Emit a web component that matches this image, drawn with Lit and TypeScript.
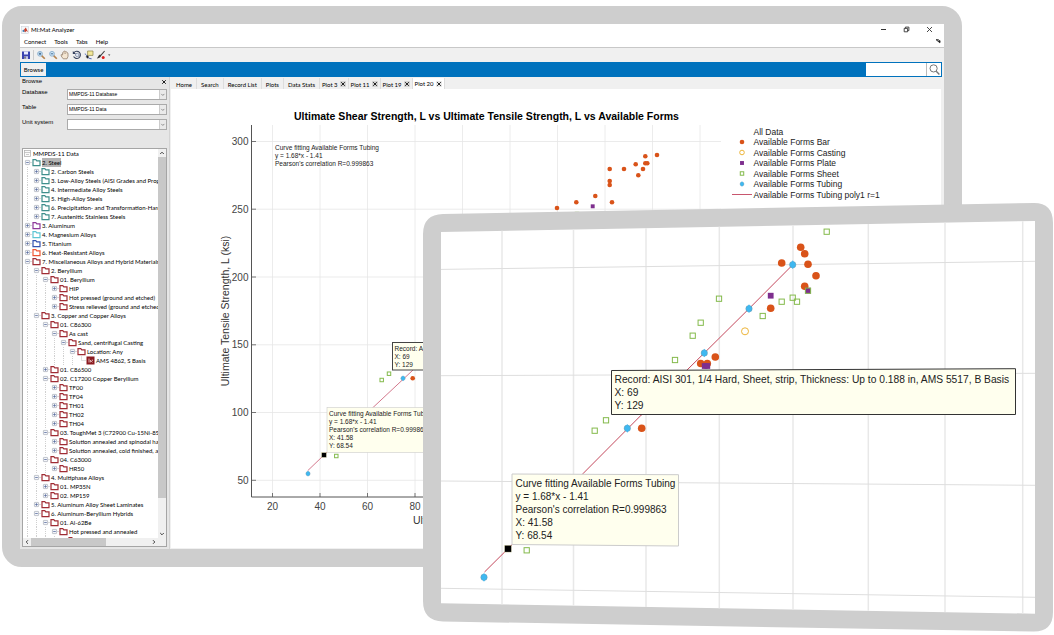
import { LitElement, html, svg, css } from "lit";
import { customElement, state } from "lit/decorators.js";
import { classMap } from "lit/directives/class-map.js";

type Point = [number, number];
type Kind = "bar" | "casting" | "plate" | "sheet" | "tubing" | "cursor";

const TEAL = "#3f8f8c";
const RED = "#a02c34";

/* [depth, state, label, folder colour]; state: "+" closed, "-" open, "*" record */
type Row = [number, string, string, string];
const TREE: Row[] = [
  [0, "-", "2. Steel", TEAL],
  [1, "+", "2. Carbon Steels", TEAL],
  [1, "+", "3. Low-Alloy Steels (AISI Grades and Proprietary)", TEAL],
  [1, "+", "4. Intermediate Alloy Steels", TEAL],
  [1, "+", "5. High-Alloy Steels", TEAL],
  [1, "+", "6. Precipitation- and Transformation-Hardening", TEAL],
  [1, "+", "7. Austenitic Stainless Steels", TEAL],
  [0, "+", "3. Aluminum", "#8e3a9b"],
  [0, "+", "4. Magnesium Alloys", "#5cc6d4"],
  [0, "+", "5. Titanium", "#3553b0"],
  [0, "+", "6. Heat-Resistant Alloys", "#ee5533"],
  [0, "-", "7. Miscellaneous Alloys and Hybrid Materials", RED],
  [1, "-", "2. Beryllium", RED],
  [2, "-", "01. Beryllium", RED],
  [3, "+", "HIP", RED],
  [3, "+", "Hot pressed (ground and etched)", RED],
  [3, "+", "Stress relieved (ground and etched)", RED],
  [1, "-", "3. Copper and Copper Alloys", RED],
  [2, "-", "01. C86300", RED],
  [3, "-", "As cast", RED],
  [4, "-", "Sand, centrifugal Casting", RED],
  [5, "-", "Location: Any", RED],
  [6, "*", "AMS 4862, S Basis", RED],
  [2, "+", "01. C86500", RED],
  [2, "-", "02. C17200 Copper Beryllium", RED],
  [3, "+", "TF00", RED],
  [3, "+", "TF04", RED],
  [3, "+", "TH01", RED],
  [3, "+", "TH02", RED],
  [3, "+", "TH04", RED],
  [2, "-", "03. ToughMet 3 (C72900 Cu-15Ni-8Sn)", RED],
  [3, "+", "Solution annealed and spinodal hardened", RED],
  [3, "+", "Solution annealed, cold finished, and aged", RED],
  [2, "-", "04. C63000", RED],
  [3, "+", "HR50", RED],
  [1, "-", "4. Multiphase Alloys", RED],
  [2, "+", "01. MP35N", RED],
  [2, "+", "02. MP159", RED],
  [1, "+", "5. Aluminum Alloy Sheet Laminates", RED],
  [1, "-", "6. Aluminum-Beryllium Hybrids", RED],
  [2, "-", "01. Al-62Be", RED],
  [3, "-", "Hot pressed and annealed", RED],
  [4, "+", "", RED],
];

/* One data marker of radius r. */
const marker = (kind: Kind, [x, y]: Point, r: number) => {
  switch (kind) {
    case "bar":
      return svg`<circle cx=${x} cy=${y} r=${r} fill="#d95319" />`;
    case "casting":
      return svg`<circle cx=${x} cy=${y} r=${r} fill="#fff" stroke="#edb53a" />`;
    case "plate":
      return svg`<rect x=${x - r * 0.85} y=${y - r * 0.85} width=${r * 1.7} height=${r * 1.7} fill="#7e2f8e" />`;
    case "sheet":
      return svg`<rect x=${x - r * 0.75} y=${y - r * 0.75} width=${r * 1.5} height=${r * 1.5} fill="none" stroke="#84ba4c" />`;
    case "tubing":
      return svg`<circle cx=${x} cy=${y} r=${r * 0.85} fill="#3fb4e8" stroke="#7a8fa0" stroke-width="0.4" />
        <path d=${`M${x} ${y - r * 1.15}L${x + r * 0.75} ${y}L${x} ${y + r * 1.15}L${x - r * 0.75} ${y}Z`} fill="#3fb8f0" />`;
    case "cursor":
      return svg`<rect x=${x - r} y=${y - r} width=${r * 2} height=${r * 2} fill="#000" stroke="#e8e6b8" stroke-width="0.4" />`;
  }
};

const series = (kind: Kind, points: Point[], r: number) =>
  points.map((p) => marker(kind, p, r));

const lines = (cls: string, x: number, y: number, step: number, rows: string[]) =>
  rows.map((t, i) => svg`<text class=${cls} x=${x} y=${y + i * step}>${t}</text>`);

const FIT = [
  "Curve fitting Available Forms Tubing",
  "y = 1.68*x - 1.41",
  "Pearson's correlation R=0.999863",
];
const FIT_AT = [...FIT, "X: 41.58", "Y: 68.54"];
const RECORD = [
  "Record: AISI 301, 1/4 Hard, Sheet, strip, Thickness: Up to 0.188 in, AMS 5517, B Basis",
  "X: 69",
  "Y: 129",
];

const chartText = css`
  :host {
    display: block;
    font-family: "Liberation Sans", Arial, sans-serif;
  }
  svg {
    display: block;
    width: 100%;
    height: auto;
  }
  text {
    fill: #222;
  }
`;

/* Full scatter plot. Text is set in drawing units, two to a pixel at the default width. */
@customElement("scatter-plot")
export class ScatterPlot extends LitElement {
  static styles = [
    chartText,
    css`
      .title { font-size: 21px; font-weight: 700; text-anchor: middle; fill: #000; }
      .axis { font-size: 21px; text-anchor: middle; fill: #333; }
      .ytick { font-size: 20px; text-anchor: end; fill: #444; }
      .xtick { font-size: 20px; text-anchor: middle; fill: #444; }
      .legend { font-size: 17px; }
      .note { font-size: 13px; }
    `,
  ];

  render() {
    const gx = [0, 1, 2, 3, 4, 5, 6, 7, 8, 9].map((i) => 272.5 + i * 47.5);
    const gy = [141.5, 209.2, 277, 344.8, 412.5, 480.3];
    const bars: Point[] = [
      [557, 208], [576.3, 202.3], [595.3, 196], [612, 202.3], [609.7, 169], [609.7, 181],
      [609.7, 185], [624, 169], [635.7, 164.3], [638.3, 175.3], [643, 169], [645.3, 156.3],
      [645.3, 163.3], [647.3, 163.3], [657, 155], [412.7, 378.3],
    ];
    const legend: [string, Kind | ""][] = [
      ["All Data", ""],
      ["Available Forms Bar", "bar"],
      ["Available Forms Casting", "casting"],
      ["Available Forms Plate", "plate"],
      ["Available Forms Sheet", "sheet"],
      ["Available Forms Tubing", "tubing"],
      ["Available Forms Tubing poly1 r=1", ""],
    ];
    return html`<svg viewBox="342 178 1540 918">
      <g transform="scale(2)">
        ${gx.map((x) => svg`<path d=${`M${x} 125V497`} stroke="#ececec" />`)}
        ${gy.map((y) => svg`<path d=${`M251 ${y}H721`} stroke="#e6e6e6" stroke-width="0.8" />`)}
        ${gx.map((x) => svg`<path d=${`M${x} 497v-4`} stroke="#555" stroke-width="0.8" />`)}
        ${gy.map((y) => svg`<path d=${`M251 ${y}h5`} stroke="#555" stroke-width="0.8" />`)}
        <path d="M251.5 125V497H721" fill="none" stroke="#555" />
        <path d="M307.7 470.7L324 455L373 407.5L413 370L430 352" fill="none" stroke="#c8566e" stroke-width="0.8" />
        ${series("bar", bars, 2.3)}
        ${series("plate", [[592.7, 206.3]], 2.3)}
        ${series("sheet", [[381.7, 380], [389, 373.7], [336.3, 456], [577, 214]], 2.3)}
        ${series("tubing", [[403, 378.3], [308, 473.7]], 2.5)}
        <rect x="392.5" y="342.5" width="60" height="27.5" fill="#ffffee" stroke="#444" />
        <rect x="327" y="407.5" width="110" height="45" fill="#ffffee" stroke="#ccc" stroke-width="0.6" />
        ${marker("cursor", [324, 455], 2.4)}
        ${legend.map(([, k], i) => (k ? marker(k, [742, 131.5 + i * 10.5], 2.3) : ""))}
        <path d="M732 194.5h20" stroke="#c8566e" />
      </g>
      <text class="title" x="973" y="240">Ultimate Shear Strength, L vs Ultimate Tensile Strength, L vs Available Forms</text>
      ${gy.map((y, i) => svg`<text class="ytick" x="497" y=${y * 2 + 7}>${300 - i * 50}</text>`)}
      ${gx.slice(0, 4).map((x, i) => svg`<text class="xtick" x=${x * 2} y="1020">${20 + i * 20}</text>`)}
      <text class="axis" transform="translate(457 622) rotate(-90)">Ultimate Tensile Strength, L (ksi)</text>
      <text class="axis" x="972" y="1047">Ultimate Shear Strength, L (ksi)</text>
      ${lines("note", 550, 299, 16, FIT)}
      ${lines("note", 789, 701, 16, ["Record: AISI 301", ...RECORD.slice(1)])}
      ${lines("note", 658, 831, 16, FIT_AT)}
      ${lines("legend", 1507, 269, 21, legend.map(([t]) => t))}
    </svg>`;
  }
}

/* Tilted close-up of the same plot, in its own frame. Four drawing units to a pixel. */
@customElement("plot-closeup")
export class PlotCloseup extends LitElement {
  static styles = [
    chartText,
    css`
      .fit { font-size: 40px; }
      .record { font-size: 41px; }
    `,
  ];

  render() {
    const gx = [502, 573.5, 646, 719.3, 793, 868.3, 945, 1022.7];
    const gy: Point[] = [[269.4, 261.3], [375.7, 373.3], [481, 485.3], [588.3, 597.3]];
    const bars: Point[] = [
      [715.3, 357], [700.7, 363.5], [707.3, 363.5], [641.7, 428.3], [781.7, 263], [800.7, 247.3],
      [804.7, 253.7], [808, 264.3], [816, 275.7], [804.7, 286.3], [770.7, 308.3],
    ];
    const sheets: Point[] = [
      [719, 298.7], [700.7, 322.7], [692.7, 335.7], [675, 360], [606, 420.3], [594.7, 430.7],
      [526.7, 550.3], [826.7, 231.7], [762.7, 316], [781.7, 301.7], [792.7, 297.7], [797, 301.7],
      [808, 290.7],
    ];
    return html`<svg viewBox="1692 812 2520 1716">
      <g transform="scale(4)">
        <path fill="#cecece" d="M443 214L1034 203Q1053 203 1053 223V612Q1053 632 1033 631.5L443 621.5Q423 621 423 601V234Q423 214.5 443 214Z" />
        <path fill="#fff" d="M441 232L1035 221V613.7L441 603.3Z" />
        ${gx.map((x) => svg`<path d=${`M${x} ${232 - ((x - 441) * 11) / 594}V${603.3 + ((x - 441) * 10.4) / 594}`} stroke="#e8e8e8" stroke-width="1.5" />`)}
        ${gy.map(([a, b]) => svg`<path d=${`M441 ${a}L1035 ${b}`} stroke="#dedede" />`)}
        <path d="M484.5 572L508 548.7L583.3 473.3L641.3 415L704.3 353L749 308.7L793 264.5" fill="none" stroke="#c4485c" />
        ${series("bar", bars, 3.8)}
        ${series("casting", [[745, 331.3]], 3.5)}
        ${series("plate", [[704.7, 366], [707.3, 366], [770.7, 295.7], [808, 290.7]], 3.4)}
        ${series("sheet", sheets, 3.5)}
        ${series("tubing", [[704.3, 353], [627.3, 428.3], [484, 577.3], [792.7, 264.7], [749, 308.7]], 3.8)}
        <path d="M611.5 370.5L1015.5 368.7V414.5H611.5Z" fill="#ffffee" stroke="#333" />
        <path d="M512 474L678.5 474.7V546L512 544.5Z" fill="#ffffee" stroke="#ccc" />
        ${marker("cursor", [508, 548.7], 3.4)}
      </g>
      ${lines("record", 2458, 1532, 52, RECORD)}
      ${lines("fit", 2062, 1946, 52, FIT_AT)}
    </svg>`;
  }
}

/* Navigation tree with its scroll bars. */
@customElement("record-tree")
export class RecordTree extends LitElement {
  static styles = css`
    :host {
      display: grid;
      grid-template: minmax(0, 1fr) 8px / minmax(0, 1fr) 8px;
      border: 1px solid #a5a5a5;
      background: #fff;
      min-height: 0;
      font: 6px/9px Lato, "Open Sans", sans-serif;
      color: #000;
    }
    .rows { overflow: hidden; margin: 0; padding: 0; list-style: none; }
    .row { display: flex; align-items: center; height: 9px; white-space: nowrap; }
    .pad { flex: none; width: 4px; height: 9px; margin-left: 4px; border-left: 1px dotted #d0d0d0; }
    .twig { flex: none; width: 9px; height: 9px; }
    .icon { flex: none; width: 9px; height: 9px; margin-right: 1px; }
    .chosen { background: #b4b4b4; }
    .bar { background: #f0f0f0; display: flex; align-items: center; }
    .v { flex-direction: column; }
    .arrow { flex: none; width: 8px; height: 8px; fill: none; stroke: #444; }
    .thumb { background: #c8c8c8; }
    .v .thumb { width: 8px; flex: 0 0 341px; }
    .h .thumb { height: 8px; flex: 0 0 75px; }
    .space { flex: 1; }
    .corner { background: #f0f0f0; }
  `;

  private twig(s: string) {
    if (s === "*") return html`<svg class="twig" viewBox="0 0 9 9"><path d="M4.5 0v4.5H9" fill="none" stroke="#ccc" stroke-width=".6" /></svg>`;
    return html`<svg class="twig" viewBox="0 0 9 9">
      <path d="M7 4.5H9" stroke="#ccc" stroke-width=".7" />
      <rect x="2.4" y="2.4" width="4.2" height="4.2" rx=".5" fill="#f4f6fa" stroke="#a8adb8" stroke-width=".7" />
      <path d=${s === "+" ? "M3.2 4.5H5.8M4.5 3.2V5.8" : "M3.2 4.5H5.8"} stroke="#5a6da0" stroke-width=".8" />
    </svg>`;
  }

  private icon(s: string, colour: string) {
    return s === "*"
      ? html`<svg class="icon" viewBox="0 0 9 9"><rect x=".5" y=".5" width="8" height="8" fill="#8b1a20" /><path d="M3 2.5v4M4.2 4.3l2.3 2M4.4 6.4V4.4M6.3 3.6v1.4" stroke="#f3d8d8" stroke-width=".8" /></svg>`
      : html`<svg class="icon" viewBox="0 0 9 9"><path d="M1 1.6H3.8L4.8 2.8H8V7.6H1Z" fill="#fff" stroke=${colour} stroke-width="1.2" /></svg>`;
  }

  render() {
    return html`
      <ul class="rows">
        <li class="row">
          <svg class="icon" viewBox="0 0 9 9"><rect x="1.5" y="1.5" width="6" height="6" fill="#fafafa" stroke="#b4b4b4" stroke-width=".8" /><path d="M1.5 3.5h6M3 5.5h3" stroke="#b4b4b4" stroke-width=".7" /></svg>MMPDS-11 Data
        </li>
        ${TREE.map(
          ([depth, s, label, colour], i) => html`<li class="row">
            ${Array.from({ length: depth }, () => html`<span class="pad"></span>`)}${this.twig(s)}${this.icon(s, colour)}<span
              class=${classMap({ chosen: i === 0 })}>${label}</span>
          </li>`,
        )}
      </ul>
      <div class="bar v">
        <svg class="arrow" viewBox="0 0 8 8"><path d="M2.2 5L4 3.2L5.8 5" /></svg>
        <div class="thumb"></div>
        <div class="space"></div>
        <svg class="arrow" viewBox="0 0 8 8"><path d="M2.2 3L4 4.8L5.8 3" /></svg>
      </div>
      <div class="bar h">
        <svg class="arrow" viewBox="0 0 8 8"><path d="M5 2.2L3.2 4L5 5.8" /></svg>
        <div class="thumb"></div>
        <div class="space"></div>
        <svg class="arrow" viewBox="0 0 8 8"><path d="M3 2.2L4.8 4L3 5.8" /></svg>
      </div>
      <div class="corner"></div>
    `;
  }
}

@customElement("app-root")
export class AppRoot extends LitElement {
  static styles = css`
    :host {
      display: block;
      position: relative;
      min-height: 635px;
      overflow: hidden;
      background: #fff;
      font: 6px/9px Lato, "Open Sans", sans-serif;
      color: #000;
    }
    * { box-sizing: border-box; }
    button, input, select {
      font: inherit;
      color: inherit;
      border: 0;
      padding: 0;
      margin: 0;
      background: none;
      border-radius: 0;
      outline: 0;
    }
    .screen {
      margin: 6px 92px 0 2px;
      border: 18px solid #cecece;
      border-radius: 20px;
      background: #cecece;
    }
    .window { background: #f0f0f0; display: flex; flex-direction: column; }
    .titlebar { display: flex; align-items: center; height: 11px; padding: 0 10px 0 1px; background: #fff; }
    .name { flex: 1; margin-left: 2px; }
    .logo { width: 8px; height: 8px; }
    .controls { display: flex; gap: 14px; }
    .controls svg { display: block; width: 9px; height: 9px; fill: none; stroke: #333; }
    .menubar { display: flex; align-items: center; gap: 8px; height: 12px; padding: 0 3px 0 4px; background: #fff; }
    .dock { width: 6px; height: 6px; margin-left: auto; }
    .toolbar { display: flex; align-items: center; gap: 2px; height: 15px; padding-left: 1px; border-top: 1px solid #c8c8c8; }
    .toolbar svg { display: block; width: 10px; height: 10px; fill: none; }
    .rule { width: 1px; height: 10px; background: #ccc; }
    .ribbon { display: flex; height: 15px; padding: 1px; margin-right: 2px; background: #0072bd; }
    .browse { width: 25px; background: #f0f0f0; }
    .find { width: 75px; margin-left: auto; display: flex; background: #fff; }
    .find input { flex: 1; min-width: 0; padding: 0 2px; }
    .find button { width: 15px; border-left: 1px solid #bbb; }
    .find svg { display: block; width: 13px; height: 13px; margin: auto; fill: none; stroke: #777; }
    .body { display: flex; }
    .side { flex: none; width: 150px; display: flex; flex-direction: column; padding: 0 2px 2px 2px; background: #e6e6e6; border-right: 1px solid #d4d4d4; }
    .head { display: flex; justify-content: space-between; align-items: center; height: 9px; margin-bottom: 3px; font-family: "Liberation Sans", sans-serif; }
    .close { width: 6px; height: 6px; display: grid; place-items: center; }
    .close svg { display: block; width: 6px; height: 6px; stroke: #222; }
    .field { display: grid; grid-template-columns: 45px minmax(0, 1fr); height: 15px; font-family: "Liberation Sans", sans-serif; }
    .field label { line-height: 7px; }
    .pick { display: flex; height: 11px; border: 1px solid #aaa; background: #fff; }
    .pick select { flex: 1; min-width: 0; appearance: none; padding: 0 1px; font-size: 5px; }
    .pick svg { width: 7px; height: 9px; background: #eaeaea; fill: none; stroke: #666; border-left: 1px solid #ccc; }
    record-tree { flex: 1 1 0; margin-top: 14px; }
    .main { flex: 1; min-width: 0; padding: 1px 3px 1px 1px; }
    .tabs { display: flex; height: 11px; }
    .tab { display: flex; align-items: center; gap: 2px; padding: 1px 4px 0 5px; border-right: 1px solid #ddd; white-space: nowrap; }
    .tab + .tab { padding-left: 4px; }
    .tab.plot { padding-left: 2px; padding-right: 2px; }
    .active { background: #fff; padding-top: 0; }
    .tab .close { background: #d4d4d4; }
    .active .close { background: #e8e8e8; }
    .canvas { background: #fff; }
    plot-closeup { position: absolute; top: 203px; left: 423px; right: 1px; }
  `;

  @state() private tab = 8;

  private cross() {
    return html`<svg viewBox="0 0 6 6"><path d="M1.2 1.2L4.8 4.8M4.8 1.2L1.2 4.8" /></svg>`;
  }

  private tools() {
    return html`<div class="toolbar">
      <button aria-label="Save"><svg viewBox="0 0 10 10"><path d="M1 1.5h8v7.5H1z" fill="#3a43b0" /><path d="M3 1.5h4v3H3z" fill="#e8ecff" /><path d="M3 6.2h4V9H3z" fill="#c4c8e8" /><path d="M4 6.5v2.2" stroke="#333" /></svg></button>
      <span class="rule"></span>
      <button aria-label="Zoom in"><svg viewBox="0 0 10 10"><path d="M5.6 5.6L8.8 8.8" stroke="#b5834d" stroke-width="1.6" /><circle cx="4" cy="3.8" r="2.4" fill="#cfe6f7" stroke="#7fa6c8" stroke-width=".8" /><path d="M2.8 3.8h2.4M4 2.6v2.4" stroke="#24507c" stroke-width=".8" /></svg></button>
      <button aria-label="Zoom out"><svg viewBox="0 0 10 10"><path d="M5.6 5.6L8.8 8.8" stroke="#b5834d" stroke-width="1.6" /><circle cx="4" cy="3.8" r="2.4" fill="#cfe6f7" stroke="#7fa6c8" stroke-width=".8" /><path d="M2.8 3.8h2.4" stroke="#24507c" stroke-width=".8" /></svg></button>
      <button aria-label="Pan"><svg viewBox="0 0 10 10"><path d="M3.2 8.8L1.2 6V4.6L2.6 5V2.6l1-.6.5-.9h1l.5.6 1 .1.5.9.9.5V6.4L7 8.8z" fill="#f4e6d2" stroke="#8a7460" stroke-width=".7" /><path d="M4.2 4V2.2M5.6 4V2.4" stroke="#8a7460" stroke-width=".5" /></svg></button>
      <button aria-label="Rotate"><svg viewBox="0 0 10 10"><path d="M2 2.6A3.6 3.6 0 1 1 1.6 6.6" stroke="#333f5c" stroke-width="1.1" /><path d="M.8.9V4H4z" fill="#333f5c" /><path d="M3.6 3.8L5.4 3.2L7 4.2V6L5.2 6.8L3.6 5.8Z" fill="#dfe6f2" stroke="#54658c" stroke-width=".6" /></svg></button>
      <button aria-label="Data cursor"><svg viewBox="0 0 10 10"><path d="M3.6 1h5.4v4.4H3.6z" fill="#f3e89a" stroke="#8a8348" stroke-width=".7" /><path d="M.8 4C3 4 2.4 8.6 7.6 8.8" stroke="#3a55a8" stroke-width=".9" /><path d="M3.4 5.4v3M1.9 6.9h3" stroke="#111" stroke-width=".9" /></svg></button>
      <button aria-label="Brush"><svg viewBox="0 0 10 10"><path d="M8.6 1L4.6 5.6" stroke="#444" stroke-width="1.1" /><path d="M5.2 5.6C4.6 8 2.4 8.4.8 8.4C2 7.6 2.2 5.4 4 4.6z" fill="#333" /><circle cx="7.2" cy="7.6" r="1.5" fill="#e02020" /></svg></button>
      <svg viewBox="0 0 10 10"><path d="M0 4.4h2.4L1.2 5.8z" fill="#333" /></svg>
    </div>`;
  }

  private field(id: string, label: string, value: string) {
    return html`<div class="field">
      <label for=${id}>${label}</label>
      <div class="pick">
        <select id=${id}><option>${value}</option></select>
        <svg viewBox="0 0 7 9"><path d="M1.5 3.8L3.3 5.6L5.1 3.8" stroke-width=".8" /></svg>
      </div>
    </div>`;
  }

  render() {
    const tabs = ["Home", "Search", "Record List", "Plots", "Data Stats", "Plot 3", "Plot 11", "Plot 19", "Plot 20"];
    return html`
      <div class="screen">
        <div class="window">
          <header class="titlebar">
            <svg class="logo" viewBox="0 0 8 8"><rect x=".6" y=".6" width="6.8" height="6.8" fill="#f4f6f8" stroke="#c4ccd4" stroke-width=".5" /><path d="M1 5L3 3.6L4 5.4L2.6 6z" fill="#3c7cb4" /><path d="M3 3.8L4.8 1.4L7 6L5.4 5L4 6.6z" fill="#c8402c" /></svg>
            <span class="name">MI:Mat Analyzer</span>
            <div class="controls">
              <button aria-label="Minimize"><svg viewBox="0 0 9 9"><path d="M2 4.5h5" /></svg></button>
              <button aria-label="Restore"><svg viewBox="0 0 9 9"><path d="M2.2 3.4h3.4v3.4H2.2zM3.4 3.2V2.1h3.5v3.5H5.8" stroke-width=".9" /></svg></button>
              <button aria-label="Close"><svg viewBox="0 0 9 9"><path d="M2 2L7 7M7 2L2 7" stroke-width=".9" /></svg></button>
            </div>
          </header>
          <nav class="menubar">
            <button>Connect</button><button>Tools</button><button>Tabs</button><button>Help</button>
            <svg class="dock" viewBox="0 0 6 6"><path d="M1 1.6h2.4L5 3.4V2.4M5 5V3H3L1 1.6z" fill="#222" stroke="#222" stroke-width=".6" /></svg>
          </nav>
          ${this.tools()}
          <div class="ribbon">
            <button class="browse">Browse</button>
            <form class="find" @submit=${(e: Event) => e.preventDefault()}>
              <input type="search" aria-label="Search" />
              <button aria-label="Search"><svg viewBox="0 0 13 13"><circle cx="5.6" cy="5.4" r="3.6" /><path d="M8.2 8.2L11.4 11.4" stroke-width="1.4" /></svg></button>
            </form>
          </div>
          <div class="body">
            <aside class="side">
              <div class="head"><span>Browse</span><button class="close" aria-label="Close panel">${this.cross()}</button></div>
              ${this.field("db", "Database", "MMPDS-11 Database")}
              ${this.field("table", "Table", "MMPDS-11 Data")}
              ${this.field("units", "Unit system", "")}
              <record-tree></record-tree>
            </aside>
            <section class="main">
              <div class="tabs">
                ${tabs.map(
                  (t, i) => html`<div class=${classMap({ tab: true, plot: i > 4, active: i === this.tab })}>
                    <button @click=${() => (this.tab = i)}>${t}</button>
                    ${i > 4 ? html`<button class="close" aria-label="Close tab">${this.cross()}</button>` : ""}
                  </div>`,
                )}
              </div>
              <div class="canvas"><scatter-plot></scatter-plot></div>
            </section>
          </div>
        </div>
      </div>
      <plot-closeup></plot-closeup>
    `;
  }
}
